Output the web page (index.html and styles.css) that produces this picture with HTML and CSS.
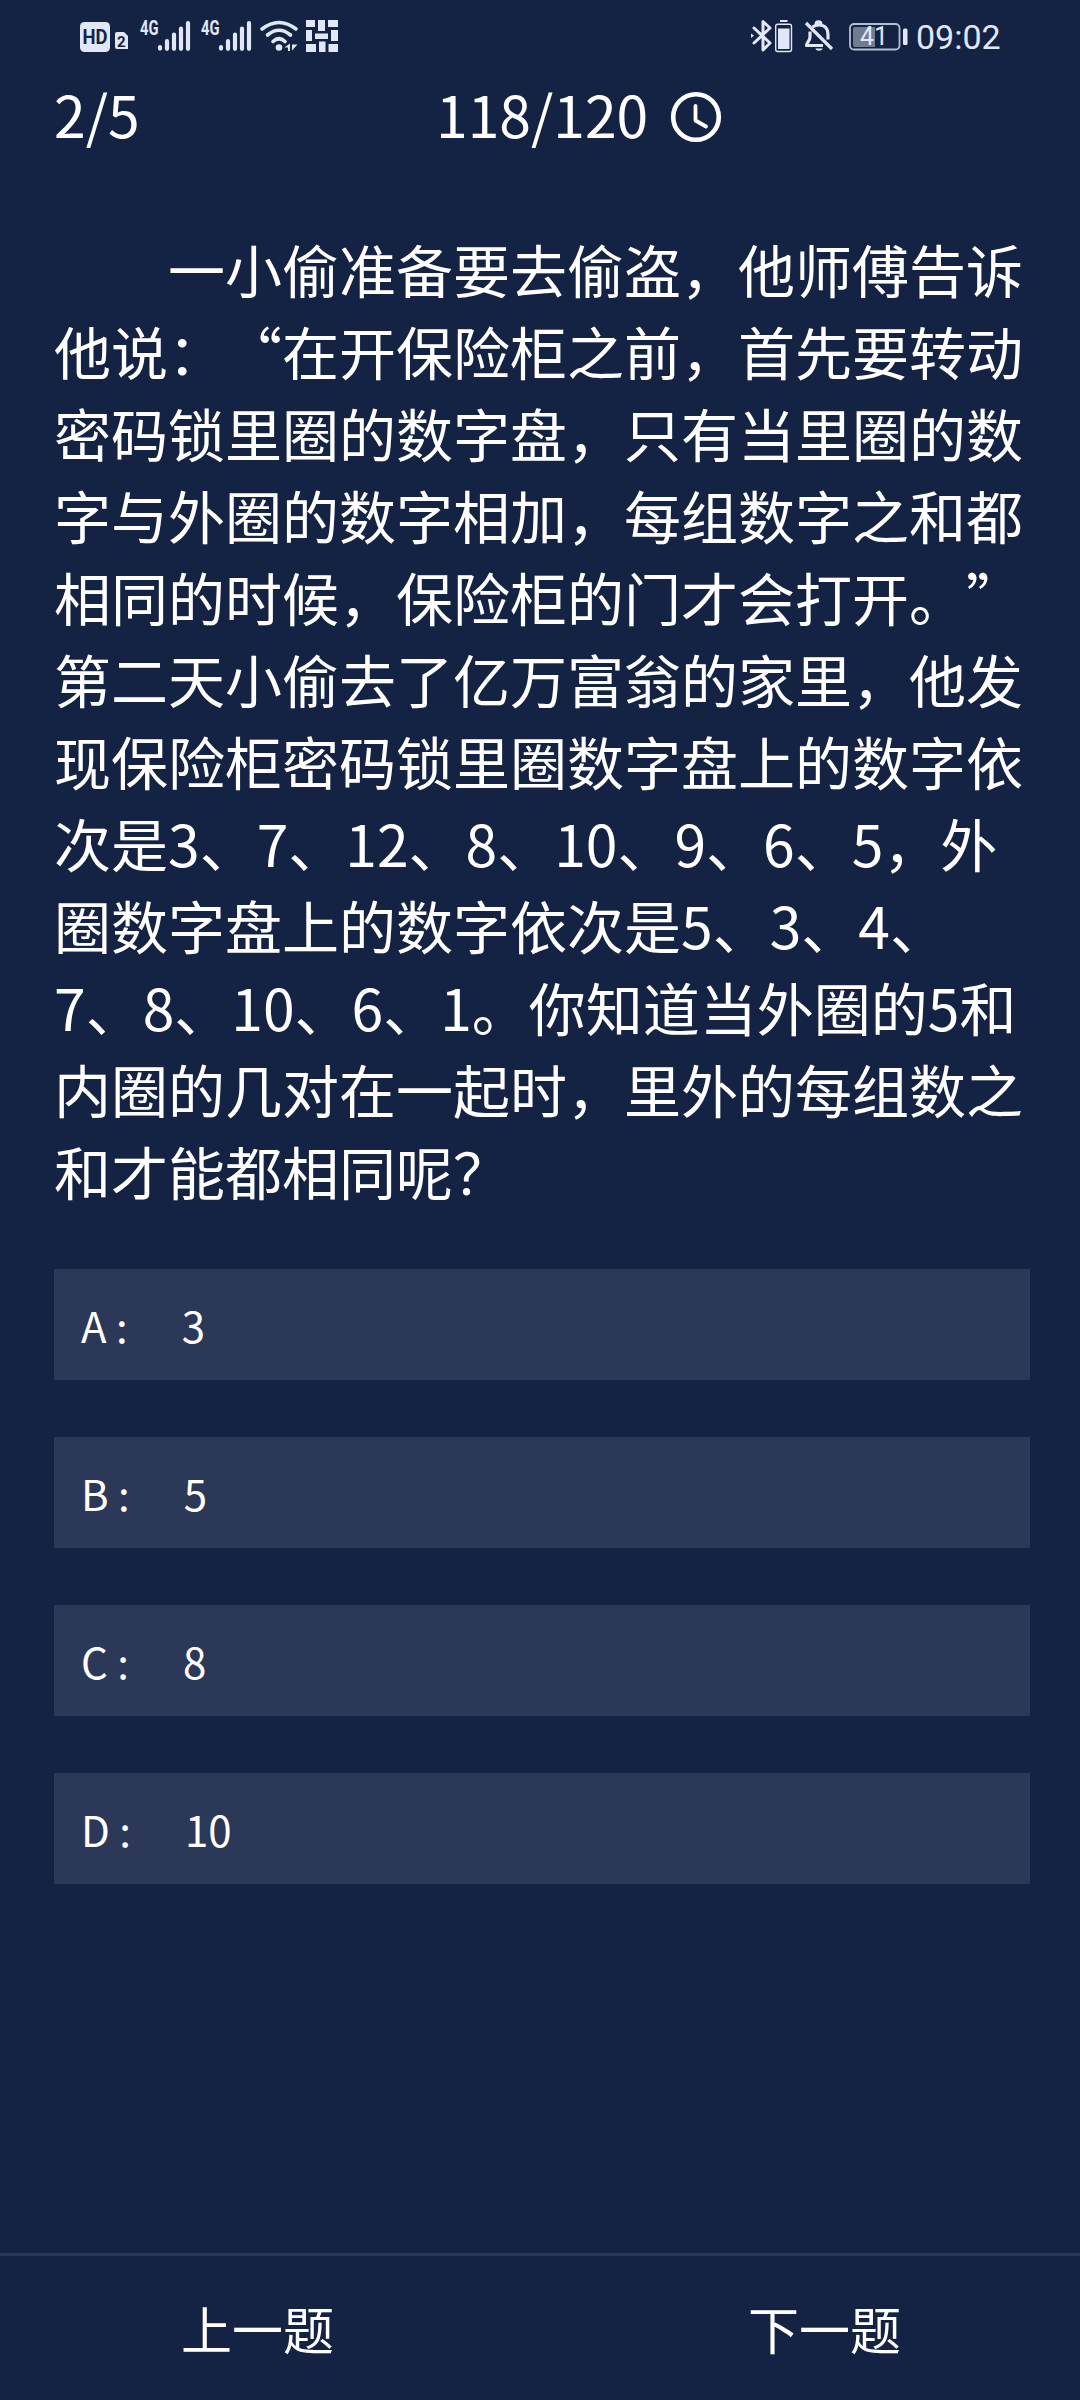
FILE: index.html
```
<!DOCTYPE html>
<html lang="zh-CN">
<head>
<meta charset="UTF-8">
<meta name="viewport" content="width=device-width, initial-scale=1.0">
<title>答题</title>
<link rel="stylesheet" href="styles.css">
</head>
<body>

<div id="app">
  <div class="statusbar">
    <svg class="status-left" width="270" height="72" viewBox="70 0 270 72" fill="#e1e7f6">
      <!-- HD 2 -->
      <rect x="80" y="22" width="30" height="30" rx="4.5"/>
      <text class="hd" x="95" y="44" textLength="25" lengthAdjust="spacingAndGlyphs">HD</text>
      <path d="M117 32h7l4 4v13h-11a2 2 0 0 1-2-2V34a2 2 0 0 1 2-2z"/>
      <text class="sim" x="121.3" y="46.5">2</text>
      <!-- signal -->
      <text class="net" x="140" y="34.5" textLength="18.5" lengthAdjust="spacingAndGlyphs">4G</text>
      <g fill="none" stroke="#e1e7f6" stroke-width="4.2" stroke-linecap="round">
        <path d="M160 47.2v1.4M167 41v7.8M174 34.5v14.3M181 28.5v20.3M188 23v25.8"/>
        <path d="M221 47.2v1.4M228 41v7.8M235 34.5v14.3M242 28.5v20.3M249 23v25.8"/>
      </g>
      <text class="net" x="201" y="34.5" textLength="18.5" lengthAdjust="spacingAndGlyphs">4G</text>
      <!-- wifi -->
      <g fill="none" stroke="#e1e7f6" stroke-width="3.6" stroke-linecap="round">
        <path d="M262 29Q279 16 296 29"/>
        <path d="M267.5 35Q279 25.500 290.500 35"/>
        <path d="M273 41.500Q279 36 285 41.500"/>
      </g>
      <circle cx="279" cy="47.500" r="3.300"/>
      <path d="M290 43.500v7.500h-2v-3.500h-3.500zM292 44.500h5.500l-5.500 6z"/>
      <!-- woven square -->
      <path d="M306 20h9v7h-9zM318 20h7v11h-7zM328 20h10v7h-10zM306 30h6v11h-6zM315 33.500h13v5.500h-13zM331 30h7v11h-7zM306 44h10v8h-10zM319 41.500h6.500v10.500h-6.500zM328.500 44h9.500v8h-9.500z"/>
    </svg>
    <div class="status-right">
      <svg width="168" height="72" viewBox="746 0 168 72" fill="none" stroke="#e1e7f6">
        <!-- bluetooth -->
        <path stroke-width="3" stroke-linejoin="round" stroke-linecap="round" d="M754 28l16 15-7 7V21.500l7 6.500-16 15"/>
        <path d="M751 33.500l3 2.200-3 2.200z" fill="#e1e7f6" stroke="none"/>
        <rect x="775.700" y="24.200" width="15.800" height="27.300" rx="2" stroke-width="1.400"/>
        <path d="M778 28.500h11.500v20.500H778zM780 20h7.500v2H780z" fill="#e1e7f6" stroke="none"/>
        <!-- muted bell -->
        <path stroke-width="3.200" stroke-linejoin="round" d="M810 31.500v5.500c0 4-3.500 5.500-3.500 8.500H823"/>
        <path stroke-width="3.200" d="M812.500 27c2-1.500 3.500-2 6.500-2 6 0 9 4 9 9.500v5M816 24.500c0-3.500 5-3.500 5 0"/>
        <path stroke-width="3.200" d="M806 23l26 26"/>
        <path d="M815.500 48.500h7c-.5 3-6.500 3-7 0z" fill="#e1e7f6" stroke="none"/>
        <!-- battery -->
        <rect x="850" y="24" width="49.500" height="25.500" rx="4" stroke="#b4bed2" stroke-width="1.800"/>
        <path d="M855 27h20v20h-20a2 2 0 0 1-2-2V29a2 2 0 0 1 2-2z" fill="#737b91" stroke="none"/>
        <text class="batt" x="874" y="45" fill="#e1e7f6" stroke="none">41</text>
        <rect x="903" y="28.500" width="4.500" height="16.500" rx="1.500" fill="#e1e7f6" stroke="none"/>
      </svg>
      <span class="clock">09:02</span>
    </div>
  </div>

  <div class="topbar">
    <div class="progress">2/5</div>
    <div class="timer">
      <span>118/120</span>
      <svg width="52" height="52" viewBox="0 0 52 52" fill="none" stroke="#fff" stroke-linecap="round" stroke-linejoin="round">
        <circle cx="26" cy="26" r="22.800" stroke-width="4.600"/>
        <path stroke-width="3.800" d="M25.500 15v14.500l10.500 6"/>
      </svg>
    </div>
  </div>

  <p class="question">一小偷准备要去偷盗，他师傅告诉他说：“在开保险柜之前，首先要转动密码锁里圈的数字盘，只有当里圈的数字与外圈的数字相加，每组数字之和都相同的时候，保险柜的门才会打开。”第二天小偷去了亿万富翁的家里，他发现保险柜密码锁里圈数字盘上的数字依次是3、7、12、8、10、9、6、5，外圈数字盘上的数字依次是5、3、4、7、8、10、6、1。你知道当外圈的5和内圈的几对在一起时，里外的每组数之和才能都相同呢？</p>

  <div class="options">
    <div class="option"><span class="key">A :</span><span>3</span></div>
    <div class="option"><span class="key">B :</span><span>5</span></div>
    <div class="option"><span class="key">C :</span><span>8</span></div>
    <div class="option"><span class="key">D :</span><span>10</span></div>
  </div>

  <div class="footer">
    <button>上一题</button>
    <button>下一题</button>
  </div>
</div>

</body>
</html>
```

FILE: styles.css
```
* { margin: 0; padding: 0; box-sizing: border-box; }

body {
  font-family: 'Noto Sans CJK SC', sans-serif;
  background: #142343;
  color: #fff;
}

#app {
  width: 1080px;
  height: 2400px;
  display: flex;
  flex-direction: column;
  overflow: hidden;
}

.statusbar {
  height: 72px;
  padding: 0 78px 0 70px;
  display: flex;
  justify-content: space-between;
  flex-shrink: 0;
}
.statusbar text { font-family: Roboto, sans-serif; }
.statusbar .hd { font-size: 20px; font-weight: 700; fill: #142343; text-anchor: middle; }
.statusbar .sim { font-size: 15px; font-weight: 700; fill: #142343; text-anchor: middle; }
.statusbar .net { font-size: 19.5px; font-weight: 700; }
.statusbar .batt { font-size: 25px; text-anchor: middle; }

.status-right { display: flex; gap: 2px; }
.clock {
  width: 86px;
  font-family: Roboto, sans-serif;
  font-size: 34px;
  line-height: 74px;
  color: #e1e7f6;
  white-space: nowrap;
}

.topbar {
  height: 90px;
  padding: 0 54px;
  display: grid;
  grid-template-columns: 382px 1fr;
  font-size: 57px;
  line-height: 82px;
}
.timer {
  display: flex;
  gap: 22px;
}
.timer svg { margin-top: 19px; }

.question {
  margin-top: 65px;
  padding: 0 54px;
  font-size: 57px;
  line-height: 82px;
  text-indent: 2em;
  text-spacing-trim: space-all;
}

.options {
  margin-top: 58px;
  padding: 0 50px 0 54px;
  display: flex;
  flex-direction: column;
  gap: 57px;
}
.option {
  height: 111px;
  padding-left: 27px;
  background: #2c3857;
  font-size: 42px;
  line-height: 111px;
}
.option .key { margin-right: 54px; }

.footer {
  height: 147px;
  margin-top: auto;
  padding: 0 179px 0 181px;
  border-top: 3px solid #2c3857;
  display: flex;
  justify-content: space-between;
}
.footer button {
  background: none;
  border: none;
  color: #fff;
  font-family: inherit;
  font-size: 51px;
  cursor: pointer;
}
```
